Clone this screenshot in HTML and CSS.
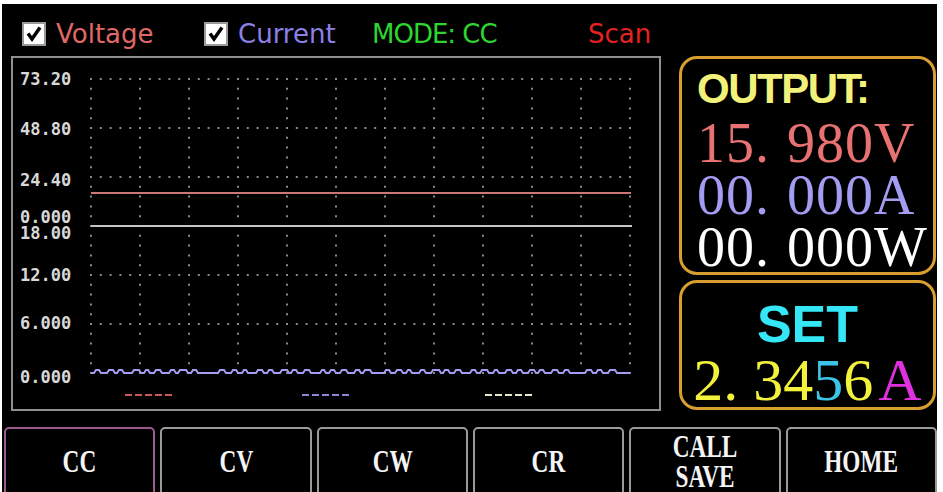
FILE: index.html
```html
<!DOCTYPE html>
<html lang="en">
<head>
    <meta charset="UTF-8">
    <meta name="viewport" content="width=device-width, initial-scale=1.0">
    <title>Electronic Load</title>
    <link rel="stylesheet" href="styles.css">
</head>
<body>
<div class="screen">

    <div class="topbar">
        <div class="trace trace-v">
            <svg class="tick" width="24" height="24" viewBox="0 0 24 24">
                <rect x="1" y="1" width="22" height="22" fill="#fff" stroke="#9a9a9a" stroke-width="2"/>
                <path d="M6 11.5 L10 17 L18 5.5" fill="none" stroke="#000" stroke-width="3.5"/>
            </svg>
            <span>Voltage</span>
        </div>
        <div class="trace trace-i">
            <svg class="tick" width="24" height="24" viewBox="0 0 24 24">
                <rect x="1" y="1" width="22" height="22" fill="#fff" stroke="#9a9a9a" stroke-width="2"/>
                <path d="M6 11.5 L10 17 L18 5.5" fill="none" stroke="#000" stroke-width="3.5"/>
            </svg>
            <span>Current</span>
        </div>
        <div class="mode">MODE: CC</div>
        <div class="scan">Scan</div>
    </div>

    <div class="main">
        <div class="chart">
            <!-- viewBox uses screen coordinates so the grid numbers read straight -->
            <svg width="646" height="351" viewBox="13 58 646 351">
                <g class="axis">
                    <text x="20" y="85">73.20</text>
                    <text x="20" y="135">48.80</text>
                    <text x="20" y="186">24.40</text>
                    <text x="20" y="223">0.000</text>
                    <text x="20" y="239">18.00</text>
                    <text x="20" y="281">12.00</text>
                    <text x="20" y="329">6.000</text>
                    <text x="20" y="383">0.000</text>
                </g>

                <g class="grid">
                    <line x1="90" y1="79" x2="632" y2="79"/>
                    <line x1="90" y1="128" x2="632" y2="128"/>
                    <line x1="90" y1="177" x2="632" y2="177"/>
                    <line x1="90" y1="275" x2="632" y2="275"/>
                    <line x1="90" y1="324" x2="632" y2="324"/>

                    <line x1="91" y1="78" x2="91" y2="374"/>
                    <line x1="140" y1="78" x2="140" y2="374"/>
                    <line x1="189" y1="78" x2="189" y2="374"/>
                    <line x1="238" y1="78" x2="238" y2="374"/>
                    <line x1="287" y1="78" x2="287" y2="374"/>
                    <line x1="336" y1="78" x2="336" y2="374"/>
                    <line x1="385" y1="78" x2="385" y2="374"/>
                    <line x1="434" y1="78" x2="434" y2="374"/>
                    <line x1="483" y1="78" x2="483" y2="374"/>
                    <line x1="532" y1="78" x2="532" y2="374"/>
                    <line x1="581" y1="78" x2="581" y2="374"/>
                    <line x1="630" y1="78" x2="630" y2="374"/>
                </g>

                <!-- voltage trace -->
                <line class="trace-volt" x1="91" y1="193" x2="631" y2="193"/>
                <!-- zero line of the current scale -->
                <line class="zero" x1="91" y1="226" x2="632" y2="226"/>
                <!-- current trace, a little noise on zero -->
                <path class="trace-amp" d="M91 373 h3
                    l2 -3 h3 l2 3 h6 l2 -3 h4 l2 3 h2 l2 -3 h3 l2 3 h8 l2 -3 h5 l2 3 h3
                    l2 -3 h2 l2 3 h4 l2 -3 h4 l2 3 h7 l2 -3 h3 l2 3 h2 l2 -3 h6 l2 3 h3
                    l2 -3 h3 l2 3 h20 l2 -3 h4 l2 3 h5 l2 -3 h3 l2 3 h4 l2 -3 h2 l2 3 h8
                    l2 -3 h4 l2 3 h3 l2 -3 h3 l2 3 h6 l2 -3 h5 l2 3 h2 l2 -3 h3 l2 3 h5
                    l2 -3 h4 l2 3 h9 l2 -3 h2 l2 3 h3 l2 -3 h3 l2 3 h4 l2 -3 h4 l2 3 h6
                    l2 -3 h3 l2 3 h2 l2 -3 h5 l2 3 h12 l2 -3 h3 l2 3 h4 l2 -3 h4 l2 3 h3
                    l2 -3 h2 l2 3 h7 l2 -3 h3 l2 3 h5 l2 -3 h6 l2 3 h2 l2 -3 h3 l2 3 h4
                    l2 -3 h4 l2 3 h8 l2 -3 h3 l2 3 h3 l2 -3 h5 l2 3 h4 l2 -3 h2 l2 3 h6
                    l2 -3 h4 l2 3 h3 l2 -3 h3 l2 3 h5 l2 -3 h4 l2 3 h2 l2 -3 h3 l2 3 h6
                    l2 -3 h4 l2 3 h4 l2 -3 h3 l2 3 h15 l2 -3 h4 l2 3 h3 l2 -3 h3 l2 3 h5
                    l2 -3 h5 l2 3 h3 H630"/>

                <!-- legend -->
                <line class="key-volt" x1="125" y1="395" x2="172" y2="395"/>
                <line class="key-amp" x1="302" y1="395" x2="349" y2="395"/>
                <line class="key-watt" x1="485" y1="395" x2="532" y2="395"/>
            </svg>
        </div>

        <div class="side">
            <div class="panel output">
                <div class="output-title">OUTPUT:</div>
                <div class="reading volts">15. 980V</div>
                <div class="reading amps">00. 000A</div>
                <div class="reading watts">00. 000W</div>
            </div>
            <div class="panel setpoint">
                <div class="set-title">SET</div>
                <div class="set-value">2. 34<span class="cursor">5</span>6<span class="unit">A</span></div>
            </div>
        </div>
    </div>

    <div class="keys">
        <div class="key active"><span>CC</span></div>
        <div class="key"><span>CV</span></div>
        <div class="key"><span>CW</span></div>
        <div class="key"><span>CR</span></div>
        <div class="key"><span>CALL<br>SAVE</span></div>
        <div class="key"><span>HOME</span></div>
    </div>

</div>
</body>
</html>
```

FILE: styles.css
```css
body {
margin: 0;
background: #fff;
font-family: "DejaVu Sans", sans-serif;
}

.screen {
width: 935px;
height: 488px;
margin: 4px 0 0 2px;
background: #000;
overflow: hidden;
}

/* top row: trace toggles, mode and scan state */
.topbar {
display: flex;
align-items: center;
height: 52px;
padding: 8px 0 0 20px;
box-sizing: border-box;
font-size: 26px;
}

.trace {
display: flex;
align-items: center;
gap: 10px;
}

.tick {
display: block;
}

.trace-v {
width: 182px;
color: #e06868;
}

.trace-i {
width: 168px;
color: #8c80e6;
}

.mode {
width: 216px;
color: #2fd42f;
letter-spacing: -1px;
}

.scan {
color: #e42222;
}

.main {
display: flex;
align-items: flex-start;
}

/* chart */
.chart {
margin-left: 9px;
width: 650px;
height: 355px;
border: 2px solid #8f8f8f;
box-sizing: border-box;
}

.chart svg {
display: block;
}

.axis text {
font-family: "DejaVu Sans Mono", monospace;
font-size: 17px;
font-weight: bold;
fill: #d8d8d8;
}

.grid line {
stroke: #8a8a8a;
stroke-width: 2;
stroke-dasharray: 2 7.8;
}

.trace-volt {
stroke: #cf7676;
stroke-width: 2;
}

.zero {
stroke: #c4c4c4;
stroke-width: 2;
}

.trace-amp {
fill: none;
stroke: #a49cf0;
stroke-width: 2;
}

.key-volt,
.key-amp,
.key-watt {
stroke-width: 2;
stroke-dasharray: 7 3;
}

.key-volt { stroke: #c85a5a; }
.key-amp { stroke: #8c86d8; }
.key-watt { stroke: #e6e6cc; }

/* readings on the right */
.side {
margin-left: 18px;
width: 257px;
display: flex;
flex-direction: column;
gap: 5px;
}

.panel {
border: 3px solid #d89e2e;
border-radius: 18px;
box-sizing: border-box;
}

.output {
height: 219px;
padding: 9px 0 0 15px;
}

.output-title {
font: bold 42px/42px "Liberation Sans", sans-serif;
letter-spacing: -1.5px;
color: #f2f27a;
margin-bottom: 7px;
}

.reading {
font: 56px/52px "Liberation Serif", serif;
letter-spacing: 1px;
word-spacing: 2px;
white-space: nowrap;
}

.volts { color: #e87272; }
.amps { color: #a39cf2; }
.watts { color: #fff; }

.setpoint {
height: 130px;
padding-top: 15px;
text-align: center;
}

.set-title {
font: bold 52px/52px "Liberation Sans", sans-serif;
color: #34e6f6;
}

.set-value {
font: 60px/60px "Liberation Serif", serif;
color: #f2f23c;
white-space: nowrap;
}

.set-value .cursor { color: #3cc4e6; }

.set-value .unit {
color: #e030e0;
margin-left: 5px;
}

/* soft keys along the bottom */
.keys {
display: flex;
gap: 5px;
margin-top: 16px;
padding-left: 2px;
}

.key {
flex: 1;
height: 70px;
border: 2px solid #9a9a9a;
border-radius: 5px;
box-sizing: border-box;
display: flex;
align-items: center;
justify-content: center;
text-align: center;
color: #f4f4f4;
font: bold 31px/30px "Liberation Serif", serif;
}

.key span {
display: inline-block;
transform: scaleX(0.75);
}

.key.active {
border-color: #9c5a8e;
}
```
